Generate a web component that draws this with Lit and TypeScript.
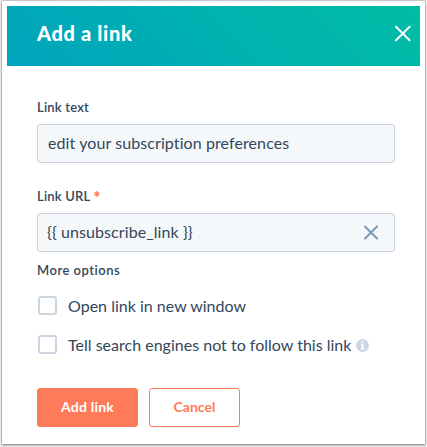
import { LitElement, html, css } from "lit";
import { customElement, property } from "lit/decorators.js";

@customElement("text-field")
class TextField extends LitElement {
  @property() label = "";
  @property() value = "";
  @property({ type: Boolean }) required = false;
  @property({ type: Boolean }) clearable = false;

  static styles = css`
    :host { display: block; }
    .label { display: flex; gap: 4px; height: 18px; line-height: 17px; font-size: 13px; font-weight: 600; letter-spacing: 0.2px; white-space: pre; }
    .star { margin-left: -1px; color: #ff7a59; font-size: 16px; font-weight: 800; line-height: 19px; }
    .box { box-sizing: border-box; display: flex; align-items: center; justify-content: space-between; height: 39px; margin-top: 7px; padding: 0 15px 0 var(--inset, 10px); border: 1px solid #cbd6e2; border-radius: 3px; background: #f5f8fa; font-size: 16px; letter-spacing: 0.09px; white-space: pre; }
    .value { padding-bottom: 2px; }
    svg { display: block; }
  `;

  render() {
    return html`
      <div class="label"><span>${this.label}</span>${this.required ? html`<span class="star">*</span>` : ""}</div>
      <div class="box">
        <span class="value">${this.value}</span>
        ${this.clearable
          ? html`<svg width="16" height="15" viewBox="0 0 16 15" fill="none" stroke="#7c98b6" stroke-width="2" stroke-linecap="round"><path d="M2 1.5 14 13.5M14 1.5 2 13.5" /></svg>`
          : ""}
      </div>
    `;
  }
}

@customElement("check-option")
class CheckOption extends LitElement {
  @property() label = "";
  @property({ type: Boolean }) info = false;

  static styles = css`
    :host { display: flex; align-items: center; height: 19px; padding-left: 1px; font-size: 16px; letter-spacing: 0.01px; white-space: pre; }
    .box { box-sizing: border-box; width: 19px; height: 19px; margin-right: 11px; border: 2px solid #cbd6e2; border-radius: 3px; background: #fff; }
    .text { line-height: 19px; }
    svg { display: block; margin: 1px 0 0 5px; }
  `;

  render() {
    return html`
      <span class="box"></span><span class="text">${this.label}</span>
      ${this.info
        ? html`<svg width="13" height="13" viewBox="0 0 13 13"><circle cx="6.5" cy="6.5" r="6.4" fill="#cbd6e2" /><circle cx="6.4" cy="3.3" r="1.15" fill="#fff" /><path d="M4.8 5.3h2.7v3.9h.9v1.2H4.7V9.2h1V6.5h-.9z" fill="#fff" /></svg>`
        : ""}
    `;
  }
}

@customElement("app-root")
class AppRoot extends LitElement {
  static styles = css`
    :host { display: block; box-sizing: border-box; height: 447px; padding: 1px 2px 2px; background: #f1f1f1; color: #33475b; font-family: Lato, "Open Sans", sans-serif; overflow: hidden; }
    .card { box-sizing: border-box; height: 443px; padding: 5px 5px 0; background: #fff; box-shadow: 0 0 0 0.5px #aaa, 0 1px 2px rgba(0, 0, 0, 0.6); }
    header { box-sizing: border-box; display: flex; align-items: center; justify-content: space-between; height: 60px; padding: 0 9px 6px 30px; background: linear-gradient(45deg, #00a4bd, #00bda5); color: #fff; }
    h1 { margin: 0; padding-bottom: 1px; font-size: 20px; line-height: 24px; font-weight: 900; letter-spacing: 0.65px; white-space: pre; }
    svg { display: block; }
    main { padding: 33px 25px 0 30px; }
    .url { margin-top: 25px; --inset: 9px; }
    .more { margin-top: 10px; height: 18px; line-height: 16px; font-size: 13px; font-weight: 600; letter-spacing: 0.5px; }
    .first { margin-top: 16px; }
    .second { margin-top: 20px; }
    .actions { display: flex; gap: 11px; margin-top: 34px; }
    button { box-sizing: border-box; height: 39px; padding: 0 0 2px; border: 1px solid #ff7a59; border-radius: 3px; font: 700 14px/35px Lato, sans-serif; }
    .primary { width: 101px; background: #ff7a59; color: #fff; letter-spacing: 0.2px; }
    .secondary { width: 91px; background: #fff; color: #ff7a59; }
  `;

  render() {
    return html`
      <div class="card">
        <header>
          <h1>Add a link</h1>
          <svg width="17" height="17" viewBox="0 0 17 17" fill="none" stroke="#fff" stroke-width="2" stroke-linecap="round"><path d="M2 1.7 15.6 15.3M15.6 1.7 2 15.3" /></svg>
        </header>
        <main>
          <text-field label="Link text" value="edit your subscription preferences"></text-field>
          <text-field class="url" label="Link URL" value="{{ unsubscribe_link }}" required clearable></text-field>
          <div class="more">More options</div>
          <check-option class="first" label="Open link in new window"></check-option>
          <check-option class="second" label="Tell search engines not to follow this link" info></check-option>
          <div class="actions">
            <button class="primary">Add link</button>
            <button class="secondary">Cancel</button>
          </div>
        </main>
      </div>
    `;
  }
}
